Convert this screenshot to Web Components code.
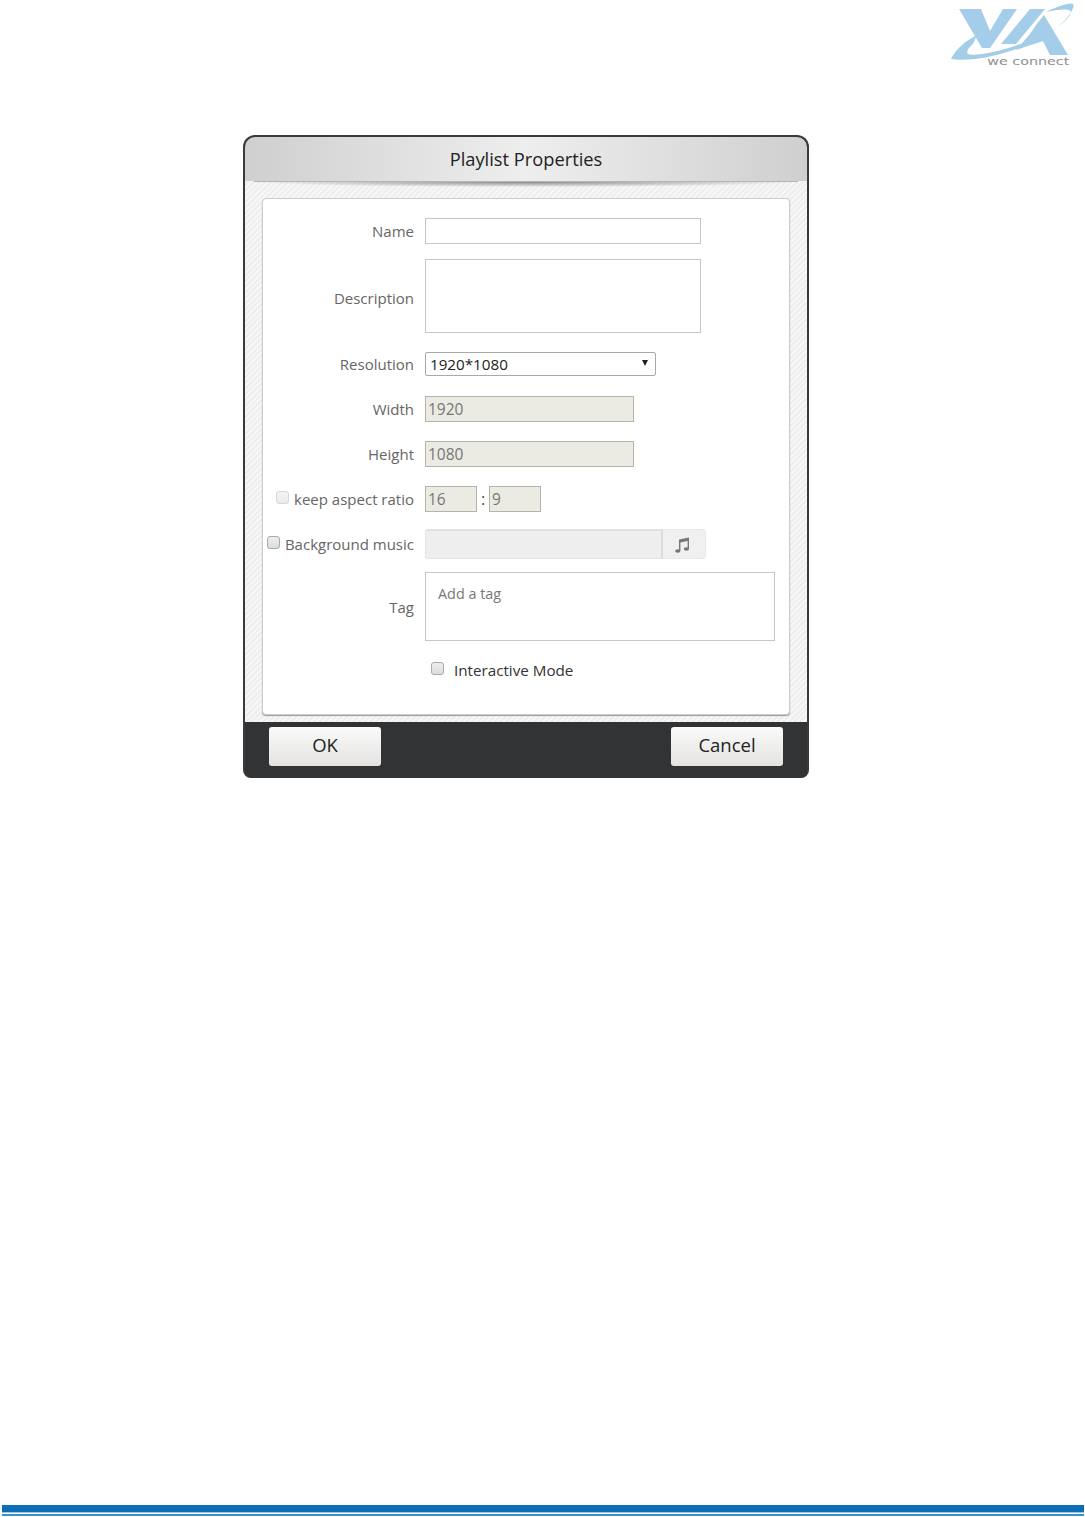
<!DOCTYPE html>
<html>
<head>
<meta charset="utf-8">
<title>Playlist Properties</title>
<style>
  html, body { margin: 0; padding: 0; background: #fff; }
</style>
</head>
<body>
<via-page>
  <via-dialog heading="Playlist Properties">
    <via-row label="Name" style="--top:0px"><via-field w="276" h="26"></via-field></via-row>
    <via-row label="Description" lift="4" style="--top:15px"><via-field w="276" h="74"></via-field></via-row>
    <via-row label="Resolution" style="--top:19px"><via-select w="231" h="24" value="1920*1080"></via-select></via-row>
    <via-row label="Width" style="--top:20px"><via-field w="209" h="26" value="1920" disabled></via-field></via-row>
    <via-row label="Height" style="--top:19px"><via-field w="209" h="26" value="1080" disabled></via-field></via-row>
    <via-row label="keep aspect ratio" check="faint" style="--top:19px">
      <via-field w="52" h="26" value="16" disabled></via-field>
      <span style="width:12px;text-align:center;color:#444">:</span>
      <via-field w="52" h="26" value="9" disabled></via-field>
    </via-row>
    <via-row label="Background music" check="on" style="--top:17px"><via-filepick></via-filepick></via-row>
    <via-row label="Tag" style="--top:13px"><via-field w="350" h="69" value="Add a tag" tag></via-field></via-row>
    <via-row style="--top:19px"><via-check text="Interactive Mode"></via-check></via-row>
    <via-button slot="actions">OK</via-button>
    <via-button slot="actions">Cancel</via-button>
  </via-dialog>
</via-page>

<script>
'use strict';

const FONT = `"Open Sans", "Noto Sans", sans-serif`;

class ViaPage extends HTMLElement {
  connectedCallback() {
    this.attachShadow({ mode: 'open' });
    this.shadowRoot.innerHTML = `
      <style>
        :host { display: flex; flex-direction: column; width: 1085px; height: 1517px; overflow: hidden; background: #fff; font-family: ${FONT}; }
        header { height: 135px; display: flex; justify-content: flex-end; align-items: flex-start; flex: none; }
        main { padding-left: 243px; flex: 1; }
        .rule { margin: 0 1px 1px 2px; flex: none; }
        .rule .thick { height: 7px; background: #0a6fb8; border-bottom: 1px solid #9cc8e6; }
        .rule .thin { height: 2px; margin-top: 1px; background: #3d8fcb; }
        .we { font: 33px "DejaVu Sans", sans-serif; fill: #8f8f8f; }
      </style>
      <header>
        <svg width="155" height="75" viewBox="930 0 155 75">
          <g fill="#a3cde8">
            <path d="M951 59C955 50 965 41 977 35L973 44C968 48 966 52 968 54C975 56 990 53 1005 49L1040 38C1055 30 1068 20 1071 13C1072 9 1065 8 1046 12C1058 6 1070 2 1073 4C1076 8 1066 22 1050 33C1030 46 1000 56 975 59C965 60 955 60 951 59Z"/>
            <path d="M959 9H981L990 31L1003 9H1017L990 48H982Z"/>
            <path d="M1030 9H1045L1016 44H1001Z"/>
            <path d="M1036 25L1044 15L1068 55H1050L1043 41L1016 50L1030 34Z"/>
          </g>
          <g transform="translate(930 0) scale(.3333)">
            <text class="we" x="172" y="196" textLength="246" lengthAdjust="spacingAndGlyphs">we connect</text>
          </g>
        </svg>
      </header>
      <main><slot></slot></main>
      <div class="rule"><div class="thick"></div><div class="thin"></div></div>`;
  }
}

class ViaDialog extends HTMLElement {
  connectedCallback() {
    this.attachShadow({ mode: 'open' });
    this.shadowRoot.innerHTML = `
      <style>
        :host { display: flex; flex-direction: column; width: 566px; height: 643px; box-sizing: border-box; border: solid #3a3a3c; border-width: 2px 2px 0 2px; border-radius: 12px 12px 8px 8px; overflow: hidden; background: #323335; }
        .title { height: 44px; flex: none; display: flex; align-items: center; justify-content: center; padding-bottom: 2px; box-sizing: border-box; background: linear-gradient(90deg, #cfcfcf 0%, #eeeeee 50%, #cfcfcf 100%); font-size: 18.3px; color: #222; }
        .body { flex: 1; position: relative; padding: 17px 17px 7px; background: repeating-linear-gradient(135deg, #f7f7f7 0 2px, #eeeeee 2px 4px); }
        .body::before { content: ''; position: absolute; left: 9px; right: 9px; top: 0; height: 6px; background: radial-gradient(ellipse 50% 100% at 50% 0, #8a8a8a 0%, rgba(150,150,150,.35) 70%, rgba(200,200,200,0) 100%); border-top: 1px solid #b5b5b5; box-sizing: border-box; }
        .panel { height: 517px; box-sizing: border-box; background: #fff; border: 1px solid #cdcdcd; border-radius: 4px; padding-top: 19px; box-shadow: 0 1px 1px #999; }
        .foot { height: 56px; flex: none; display: flex; justify-content: space-between; padding: 5px 24px 0 24px; box-sizing: border-box; }
      </style>
      <div class="title">${this.getAttribute('heading')}</div>
      <div class="body"><div class="panel"><slot></slot></div></div>
      <div class="foot"><slot name="actions"></slot></div>`;
  }
}

class ViaRow extends HTMLElement {
  connectedCallback() {
    this.attachShadow({ mode: 'open' });
    const check = this.getAttribute('check');
    const box = check ? `<span class="box ${check}"></span>` : '';
    const lift = this.getAttribute('lift') || 0;
    this.shadowRoot.innerHTML = `
      <style>
        :host { display: grid; grid-template-columns: 151px 1fr; column-gap: 11px; align-items: center; margin-top: var(--top, 0); }
        .label { display: flex; justify-content: flex-end; align-items: center; gap: 5px; padding-top: ${lift}px; font-size: 15px; line-height: 20px; color: #666; white-space: nowrap; }
        .box { width: 13px; height: 13px; box-sizing: border-box; border-radius: 3px; border: 1px solid #aaa; background: linear-gradient(#eee, #dcdcdc); margin-top: -3px; }
        .box.faint { border-color: #d8d8d8; background: linear-gradient(#f4f4f4, #ebebeb); }
        .ctl { display: flex; align-items: center; }
      </style>
      <div class="label">${box}<span>${this.getAttribute('label') || ''}</span></div>
      <div class="ctl"><slot></slot></div>`;
  }
}

class ViaField extends HTMLElement {
  connectedCallback() {
    this.attachShadow({ mode: 'open' });
    const disabled = this.hasAttribute('disabled');
    const tag = this.hasAttribute('tag');
    this.shadowRoot.innerHTML = `
      <style>
        :host { display: block; flex: none; width: ${this.getAttribute('w')}px; height: ${this.getAttribute('h')}px; box-sizing: border-box; border: 1px solid ${disabled ? '#b4b4ac' : '#c6c6c6'}; background: ${disabled ? '#ebebe4' : '#fff'}; font-size: ${tag ? 14.4 : 15.5}px; color: ${disabled ? '#777' : '#333'}; }
        div { padding: ${tag ? '10px 0 0 12px' : '0 0 0 2px'}; line-height: ${tag ? '22px' : '24px'}; color: ${tag ? '#777' : 'inherit'}; }
      </style>
      <div>${this.getAttribute('value') || ''}</div>`;
  }
}

class ViaSelect extends HTMLElement {
  connectedCallback() {
    this.attachShadow({ mode: 'open' });
    this.shadowRoot.innerHTML = `
      <style>
        :host { display: flex; align-items: center; justify-content: space-between; width: ${this.getAttribute('w')}px; height: ${this.getAttribute('h')}px; box-sizing: border-box; border: 1px solid #a9a9a9; border-radius: 2px; background: #fff; font-size: 15.2px; color: #222; padding: 0 7px 0 4px; }
        i { width: 0; height: 0; border: solid transparent; border-width: 6px 3.5px 0; border-top-color: #222; margin-top: -2px; }
      </style>
      <span>${this.getAttribute('value')}</span><i></i>`;
  }
}

class ViaFilepick extends HTMLElement {
  connectedCallback() {
    this.attachShadow({ mode: 'open' });
    this.shadowRoot.innerHTML = `
      <style>
        :host { display: flex; width: 281px; height: 30px; }
        .path { width: 238px; box-sizing: border-box; background: #eee; border: 1px solid #e4e4e4; border-top: 2px solid #e0e0e0; border-radius: 3px 0 0 3px; border-right: 2px solid #dcdcdc; }
        .btn { flex: 1; display: flex; align-items: center; justify-content: center; padding-right: 2px; background: #f0f0f0; border: 1px solid #e8e8e8; border-left: 0; border-radius: 0 4px 4px 0; }
        svg { transform: translate(-1px, 1px); }
      </style>
      <div class="path"></div>
      <div class="btn">
        <svg width="18" height="18" viewBox="0 0 18 18">
          <path fill="#777" d="M6 3.5L16 1.5V13H14.6V5L7.4 6.4V15H6Z"/>
          <ellipse cx="4.8" cy="15" rx="2.6" ry="1.8" fill="#777"/>
          <ellipse cx="13.4" cy="13" rx="2.6" ry="1.8" fill="#777"/>
        </svg>
      </div>`;
  }
}

class ViaCheck extends HTMLElement {
  connectedCallback() {
    this.attachShadow({ mode: 'open' });
    this.shadowRoot.innerHTML = `
      <style>
        :host { display: flex; align-items: center; gap: 10px; padding-left: 6px; font-size: 15.2px; line-height: 20px; color: #333; }
        i { width: 13px; height: 13px; box-sizing: border-box; border-radius: 3px; border: 1px solid #aaa; background: linear-gradient(#eee, #dcdcdc); margin-top: -3px; }
      </style>
      <i></i><span>${this.getAttribute('text')}</span>`;
  }
}

class ViaButton extends HTMLElement {
  connectedCallback() {
    this.attachShadow({ mode: 'open' });
    this.shadowRoot.innerHTML = `
      <style>
        :host { display: flex; align-items: center; justify-content: center; width: 112px; height: 39px; box-sizing: border-box; padding-bottom: 5px; border-radius: 3px; background: linear-gradient(#fafafa, #e4e3e1); font-size: 18.5px; color: #222; }
      </style>
      <slot></slot>`;
  }
}

customElements.define('via-page', ViaPage);
customElements.define('via-dialog', ViaDialog);
customElements.define('via-row', ViaRow);
customElements.define('via-field', ViaField);
customElements.define('via-select', ViaSelect);
customElements.define('via-filepick', ViaFilepick);
customElements.define('via-check', ViaCheck);
customElements.define('via-button', ViaButton);
</script>
</body>
</html>
